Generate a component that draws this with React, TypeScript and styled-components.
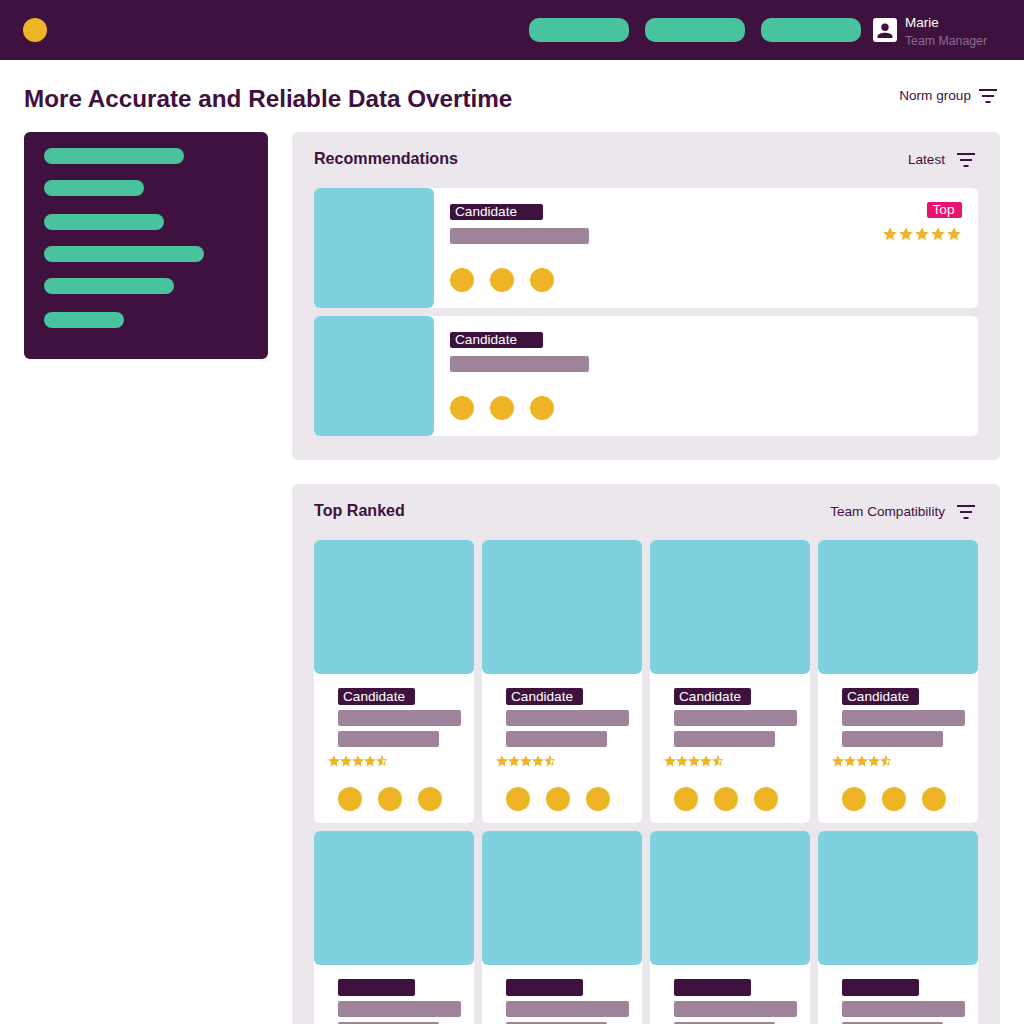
import React from 'react';
import styled, { createGlobalStyle } from 'styled-components';

const plum = '#3e113f';
const mint = '#48c39e';
const amber = '#edb526';
const sky = '#80d1df';
const mauve = '#9e839b';
const panelGrey = '#ebe7ec';

const GlobalStyle = createGlobalStyle`
  html, body {
    margin: 0;
    height: 1024px;
    overflow: hidden;
    background: #fff;
    font-family: "Liberation Sans", Arial, sans-serif;
    color: ${plum};
  }
`;

const Header = styled.header`
  height: 60px;
  background: ${plum};
  display: flex;
  align-items: center;
  padding: 0 37px 0 23px;
`;

const Dot = styled.div`
  width: 24px;
  height: 24px;
  border-radius: 50%;
  background: ${amber};
  flex: none;
`;

const NavPills = styled.nav`
  margin-left: auto;
  display: flex;
  gap: 16px;
`;

const NavPill = styled.div`
  width: 100px;
  height: 24px;
  border-radius: 10px;
  background: ${mint};
`;

const User = styled.div`
  display: flex;
  align-items: center;
  margin-left: 12px;
  gap: 8px;
`;

const UserText = styled.div`
  display: flex;
  flex-direction: column;
  gap: 4px;
  padding-top: 3px;
  line-height: 15px;
`;

const UserName = styled.span`
  color: #fff;
  font-size: 13.5px;
`;

const UserRole = styled.span`
  color: #8b6d8c;
  font-size: 12.3px;
`;

const Page = styled.main`
  padding: 0 24px;
`;

const TitleRow = styled.div`
  display: flex;
  justify-content: space-between;
  height: 72px;
  padding-right: 3px;
`;

const Title = styled.h1`
  margin: 24px 0 0;
  font-size: 24.25px;
  line-height: 30px;
  font-weight: 700;
`;

const SortControl = styled.div`
  display: flex;
  align-items: center;
  gap: 12px;
  font-size: 13.6px;
  line-height: 16px;
`;

const PageSort = styled(SortControl)`
  height: 72px;
  gap: 8px;
`;

const Columns = styled.div`
  display: grid;
  grid-template-columns: 244px 708px;
  gap: 24px;
  align-items: start;
`;

const Sidebar = styled.aside`
  height: 227px;
  box-sizing: border-box;
  background: ${plum};
  border-radius: 6px;
  padding: 16px 20px;
  display: flex;
  flex-direction: column;
`;

const SideBar = styled.div<{ $width: number; $top: number }>`
  width: ${(p) => p.$width}px;
  height: 16px;
  margin-top: ${(p) => p.$top}px;
  border-radius: 8px;
  background: ${mint};
`;

const Content = styled.div`
  display: flex;
  flex-direction: column;
  gap: 24px;
`;

const Panel = styled.section`
  background: ${panelGrey};
  border-radius: 6px;
  padding: 16px 22px 24px;
`;

const PanelHead = styled.div`
  display: flex;
  justify-content: space-between;
  align-items: center;
  height: 24px;
  margin-bottom: 16px;
  padding-right: 3px;
`;

const PanelTitle = styled.h2`
  margin: -4px 0 0;
  font-size: 16.1px;
  line-height: 20px;
  font-weight: 700;
`;

const RowList = styled.div`
  display: flex;
  flex-direction: column;
  gap: 8px;
`;

const RowCard = styled.article`
  height: 120px;
  display: flex;
  background: #fff;
  border-radius: 6px;
  overflow: hidden;
`;

const RowImage = styled.div`
  width: 120px;
  background: ${sky};
  border-radius: 0 6px 6px 0;
  flex: none;
`;

const RowBody = styled.div`
  flex: 1;
  padding: 16px;
  display: flex;
  flex-direction: column;
  position: relative;
`;

const Label = styled.div<{ $width: number; $height: number }>`
  width: ${(p) => p.$width}px;
  height: ${(p) => p.$height}px;
  box-sizing: border-box;
  padding-left: 5px;
  background: ${plum};
  border-radius: 2px;
  color: #fff;
  font-size: 13.6px;
  line-height: ${(p) => p.$height}px;
`;

const Bar = styled.div<{ $width: number; $top: number }>`
  width: ${(p) => p.$width}px;
  height: 16px;
  margin-top: ${(p) => p.$top}px;
  background: ${mauve};
  border-radius: 2px;
`;

const Dots = styled.div<{ $top: number }>`
  display: flex;
  gap: 16px;
  margin-top: ${(p) => p.$top}px;
`;

const TopBlock = styled.div`
  position: absolute;
  top: 14px;
  right: 16px;
  display: flex;
  flex-direction: column;
  align-items: flex-end;
  gap: 9px;
`;

const TopTag = styled.div`
  width: 35px;
  height: 16px;
  box-sizing: border-box;
  padding-right: 2px;
  background: #e9146f;
  border-radius: 2px;
  color: #fff;
  font-size: 13.6px;
  line-height: 16px;
  text-align: center;
`;

const StarRow = styled.div<{ $gap: number }>`
  display: flex;
  gap: ${(p) => p.$gap}px;
`;

const TopStars = styled(StarRow)`
  margin-right: 1px;
`;

const CardGrid = styled.div`
  display: grid;
  grid-template-columns: repeat(4, 160px);
  gap: 8px;
`;

const GridCard = styled.article`
  height: 283px;
  background: #fff;
  border-radius: 6px;
  overflow: hidden;
  display: flex;
  flex-direction: column;
`;

const GridImage = styled.div`
  height: 134px;
  background: ${sky};
  border-radius: 0 0 6px 6px;
  flex: none;
`;

const GridBody = styled.div`
  padding: 14px 0 0 24px;
  display: flex;
  flex-direction: column;
`;

const GridStars = styled.div`
  margin: 8px 0 0 -10px;
`;

const FilterIcon = () => (
  <svg width="18" height="14" viewBox="0 0 18 14" fill="none" stroke={plum} strokeWidth="2">
    <path d="M0 1h18M3 7h12M6.5 13h5" />
  </svg>
);

const Star = ({ size, half }: { size: number; half?: boolean }) => (
  <svg width={size} height={size} viewBox="0 0 12 12">
    {half ? (
      <>
        <path
          d="M6 1.2l1.35 3.3 3.3.35-2.45 2.2.7 3.1L6 8.6z"
          fill="none"
          stroke={amber}
          strokeWidth="1"
        />
        <path d="M6 .2L4.3 4.05.1 4.48l3.14 2.82-.88 4.12L6 9.3z" fill={amber} />
      </>
    ) : (
      <path
        d="M6 .2l1.7 3.85 4.2.43-3.14 2.82.88 4.12L6 9.3l-3.64 2.12.88-4.12L.1 4.48l4.2-.43z"
        fill={amber}
      />
    )}
  </svg>
);

const UserIcon = () => (
  <svg width="24" height="24" viewBox="0 0 24 24">
    <rect width="24" height="24" rx="3" fill="#fff" />
    <circle cx="12" cy="9.2" r="3.7" fill={plum} />
    <path d="M4.5 20v-1.6c0-2.4 4.2-3.6 7.5-3.6s7.5 1.2 7.5 3.6V20z" fill={plum} />
  </svg>
);

const sideBars = [
  { width: 140, top: 0 },
  { width: 100, top: 16 },
  { width: 120, top: 18 },
  { width: 160, top: 16 },
  { width: 130, top: 16 },
  { width: 80, top: 18 },
];

const ThreeDots = ({ top }: { top: number }) => (
  <Dots $top={top}>
    <Dot />
    <Dot />
    <Dot />
  </Dots>
);

const Recommendation = ({ top }: { top?: boolean }) => (
  <RowCard>
    <RowImage />
    <RowBody>
      <Label $width={93} $height={16}>Candidate</Label>
      <Bar $width={139} $top={8} />
      <ThreeDots top={24} />
      {top && (
        <TopBlock>
          <TopTag>Top</TopTag>
          <TopStars $gap={2}>
            {[0, 1, 2, 3, 4].map((i) => (
              <Star key={i} size={14} />
            ))}
          </TopStars>
        </TopBlock>
      )}
    </RowBody>
  </RowCard>
);

const RankedCard = ({ named }: { named: boolean }) => (
  <GridCard>
    <GridImage />
    <GridBody>
      <Label $width={77} $height={17}>{named ? 'Candidate' : ''}</Label>
      <Bar $width={123} $top={5} />
      <Bar $width={101} $top={5} />
      <GridStars>
        <StarRow $gap={0}>
          {[0, 1, 2, 3].map((i) => (
            <Star key={i} size={12} />
          ))}
          <Star size={12} half />
        </StarRow>
      </GridStars>
      <ThreeDots top={20} />
    </GridBody>
  </GridCard>
);

export default function App() {
  return (
    <>
      <GlobalStyle />
      <Header>
        <Dot />
        <NavPills>
          <NavPill />
          <NavPill />
          <NavPill />
        </NavPills>
        <User>
          <UserIcon />
          <UserText>
            <UserName>Marie</UserName>
            <UserRole>Team Manager</UserRole>
          </UserText>
        </User>
      </Header>
      <Page>
        <TitleRow>
          <Title>More Accurate and Reliable Data Overtime</Title>
          <PageSort>
            Norm group
            <FilterIcon />
          </PageSort>
        </TitleRow>
        <Columns>
          <Sidebar>
            {sideBars.map((b, i) => (
              <SideBar key={i} $width={b.width} $top={b.top} />
            ))}
          </Sidebar>
          <Content>
            <Panel>
              <PanelHead>
                <PanelTitle>Recommendations</PanelTitle>
                <SortControl>
                  Latest
                  <FilterIcon />
                </SortControl>
              </PanelHead>
              <RowList>
                <Recommendation top />
                <Recommendation />
              </RowList>
            </Panel>
            <Panel>
              <PanelHead>
                <PanelTitle>Top Ranked</PanelTitle>
                <SortControl>
                  Team Compatibility
                  <FilterIcon />
                </SortControl>
              </PanelHead>
              <CardGrid>
                {[0, 1, 2, 3, 4, 5, 6, 7].map((i) => (
                  <RankedCard key={i} named={i < 4} />
                ))}
              </CardGrid>
            </Panel>
          </Content>
        </Columns>
      </Page>
    </>
  );
}
